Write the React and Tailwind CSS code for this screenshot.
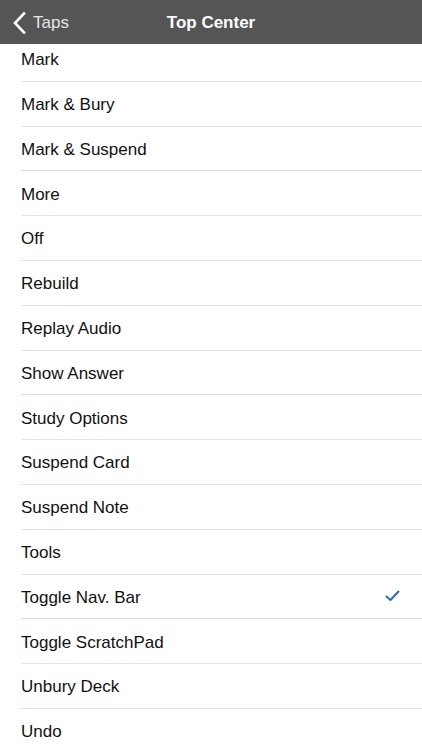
import React from 'react'

const items = [
  'Mark',
  'Mark & Bury',
  'Mark & Suspend',
  'More',
  'Off',
  'Rebuild',
  'Replay Audio',
  'Show Answer',
  'Study Options',
  'Suspend Card',
  'Suspend Note',
  'Tools',
  'Toggle Nav. Bar',
  'Toggle ScratchPad',
  'Unbury Deck',
  'Undo',
]

const selected = 'Toggle Nav. Bar'

const CheckMark = () => (
  <svg width="15" height="12" viewBox="0 0 15 12" fill="none">
    <path d="M1.5 6.5 L5.5 10 L13.5 1.5" stroke="#2b6db3" strokeWidth="2" strokeLinecap="round" strokeLinejoin="round" />
  </svg>
)

export default function App() {
  return (
    <div className="w-[422px] h-[750px] overflow-hidden bg-white flex flex-col font-['Liberation_Sans',Arial,sans-serif]">
      <div className="h-[44px] shrink-0 bg-[#555555] flex items-center relative pt-[2px]">
        <div className="flex items-center pl-[13px] gap-[7px]">
          <svg width="13" height="22" viewBox="0 0 13 22" fill="none">
            <path d="M11 1.5 L2 11 L11 20.5" stroke="#ffffff" strokeWidth="2.6" strokeLinecap="square" />
          </svg>
          <span className="text-[17px] text-[#e6e6e6]">Taps</span>
        </div>
        <div className="absolute inset-0 pt-[2px] flex items-center justify-center pointer-events-none">
          <span className="text-[17px] font-bold text-white">Top Center</span>
        </div>
      </div>
      <div className="flex-1 overflow-hidden">
        <ul className="-mt-[7px]">
          {items.map((item) => (
            <li key={item} className="pl-[21px]">
              <div className="h-[44.8px] flex items-center justify-between pr-[22px] border-b border-[#e2e2e2]">
                <span className="text-[17px] text-[#111111] pt-[2px]">{item}</span>
                {item === selected && <CheckMark />}
              </div>
            </li>
          ))}
        </ul>
      </div>
    </div>
  )
}
